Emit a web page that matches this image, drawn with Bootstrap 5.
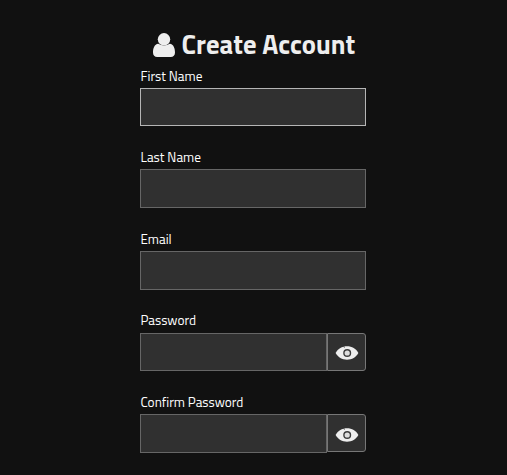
<!DOCTYPE html>
<html lang="en">
<head>
<meta charset="utf-8">
<meta name="viewport" content="width=device-width, initial-scale=1">
<title>Create Account</title>
<link href="https://cdn.jsdelivr.net/npm/bootstrap@5.3.0/dist/css/bootstrap.min.css" rel="stylesheet">
<style>
body{background:#111;color:#eee;font-family:"Titillium Web","Roboto",sans-serif;overflow:hidden}
.signup{width:226px;margin-left:140px;padding-top:24.5px}
.signup-title{height:43px;padding-left:13px;padding-bottom:3px;font-size:26.67px;font-weight:700;line-height:36px;white-space:nowrap}
.signup-title span{margin-top:-2px}
.user-icon{width:22px;height:24px;margin-right:6.6px}
.field{height:81.7px}
.field .form-label{display:block;height:20px;padding-left:.5px;line-height:17px;font-size:13.33px;color:#fff;white-space:nowrap}
.field .form-label.raised{line-height:15px}
.field .form-control{height:38.7px;background:#303030;border:1px solid #666;border-radius:0;color:#eee;box-shadow:none}
.field .form-control.active-field{border-color:#b5b5b5}
.eye-btn{width:39px;height:38.1px;background:#303030!important;border:1px solid #777!important;border-radius:0 3px 3px 0!important;margin-left:0!important}
.eye-btn svg{margin-top:2px}
.eye-btn svg.lower{margin-top:4px}
</style>
<script src="https://cdn.jsdelivr.net/npm/bootstrap@5.3.0/dist/js/bootstrap.bundle.min.js"></script>
</head>
<body>
<svg class="d-none" xmlns="http://www.w3.org/2000/svg">
<symbol id="eye" viewBox="0 0 24 14"><path fill="#eee" d="M.6 7C3 2.700 7 .3 12 .3S21 2.700 23.400 7C21 11.300 17 13.700 12 13.700S3 11.300.6 7Z"/><circle cx="12.200" cy="7" r="3.300" fill="#ddd" stroke="#3c3c3c" stroke-width="1.400"/><path d="M8.800 .3l.6 1.300" stroke="#303030" stroke-width=".9"/></symbol>
</svg>
<main class="signup">
<h1 class="signup-title d-flex align-items-center mb-0"><svg class="user-icon flex-shrink-0" viewBox="0 0 22 24" fill="#eee" aria-hidden="true"><circle cx="11" cy="6.300" r="6.200"/><path d="M5.200 10.700Q11 14.300 16.800 10.700C20.500 11.300 22 15 22 19.500C22 22.300 20.300 24 17.800 24H4.200C1.700 24 0 22.300 0 19.500C0 15 1.500 11.300 5.200 10.700Z"/></svg><span>Create Account</span></h1>
<form>
<div class="field"><label class="form-label mb-0" for="first">First Name</label><input class="form-control active-field" id="first" type="text"></div>
<div class="field"><label class="form-label mb-0" for="last">Last Name</label><input class="form-control" id="last" type="text"></div>
<div class="field"><label class="form-label mb-0" for="email">Email</label><input class="form-control" id="email" type="email"></div>
<div class="field"><label class="form-label raised mb-0" for="pass">Password</label><div class="input-group align-items-start flex-nowrap"><input class="form-control" id="pass" type="password"><button class="btn eye-btn p-0 d-flex align-items-center justify-content-center" type="button" aria-label="Show password"><svg width="24" height="14"><use href="#eye"/></svg></button></div></div>
<div class="field"><label class="form-label mb-0" for="confirm">Confirm Password</label><div class="input-group align-items-start flex-nowrap"><input class="form-control" id="confirm" type="password"><button class="btn eye-btn p-0 d-flex align-items-center justify-content-center" type="button" aria-label="Show password"><svg class="lower" width="24" height="14"><use href="#eye"/></svg></button></div></div>
</form>
</main>
</body>
</html>
